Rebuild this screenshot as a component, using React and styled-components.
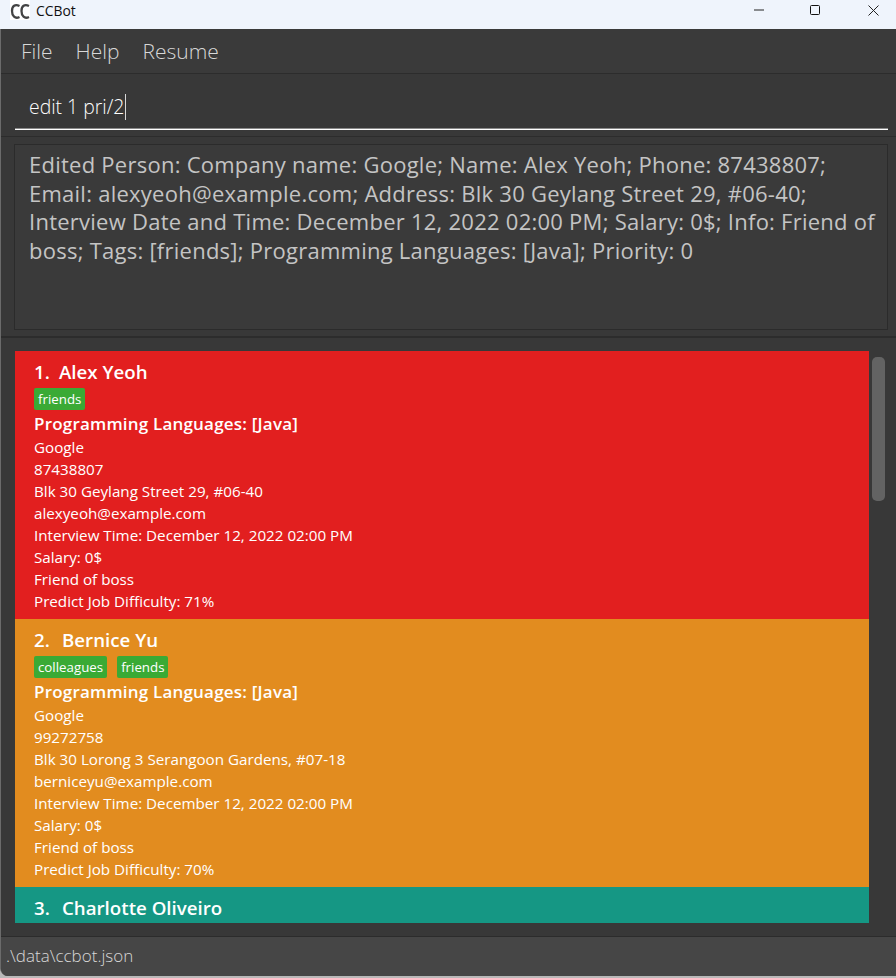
import React from 'react';
import styled, { createGlobalStyle } from 'styled-components';

const GlobalStyle = createGlobalStyle`
  html, body {
    margin: 0;
    padding: 0;
    background: #b4b4b4;
  }
  #root {
    height: 978px;
    overflow: hidden;
  }
`

const Screen = styled.div`
  width: 896px;
  height: 978px;
  display: flex;
  flex-direction: column;
  padding-bottom: 2px;
  box-sizing: border-box;
  font-family: 'Open Sans', 'Noto Sans', sans-serif;
  background: #b9b9b9;
`

const TitleBar = styled.div`
  height: 29px;
  flex: none;
  display: flex;
  align-items: flex-start;
  background: #eff4fc;
  color: #111;
  font-size: 13.9px;
`

const Logo = styled.svg`
  width: 20px;
  height: 20px;
  margin-left: 10px;
  background: #fff;
`

const AppName = styled.span`
  margin-left: 6px;
  flex: 1;
  line-height: 21px;
`

const WinButton = styled.div`
  width: 46px;
  height: 20px;
  margin-left: ${props => props.$gap || 0}px;
  display: flex;
  align-items: center;
  justify-content: center;
`

const Body = styled.div`
  flex: 1;
  min-height: 0;
  display: flex;
  flex-direction: column;
  background: #383838;
  border-left: 1px solid #6b6b6b;
  border-radius: 0 0 0 8px;
  overflow: hidden;
`

const MenuBar = styled.div`
  height: 44px;
  flex: none;
  display: flex;
  align-items: center;
  gap: 23px;
  padding-left: 20px;
  border-bottom: 1px solid #2c2c2c;
  background: #3a3a3a;
`

const MenuItem = styled.span`
  color: #d8d8d8;
  font-size: 21px;
  font-weight: 300;
`

const CommandPane = styled.div`
  height: 63px;
  flex: none;
  box-sizing: border-box;
  padding: 0 8px 0 14px;
  border-bottom: 1px solid #2c2c2c;
  display: flex;
`

const CommandBox = styled.div`
  flex: 1;
  height: 56px;
  box-sizing: border-box;
  border-bottom: 1px solid #ffffff;
  box-shadow: inset 0 -1px #8a8a8a;
  padding: 10px 0 0 14px;
  display: flex;
  align-items: center;
  color: #fff;
  font-size: 19.4px;
  font-weight: 300;
`

const Caret = styled.span`
  width: 1px;
  height: 26px;
  margin-left: 1px;
  background: #d8d8d8;
`

const ResultPane = styled.div`
  height: 201px;
  flex: none;
  box-sizing: border-box;
  padding: 7px 8px 6px 13px;
  border-bottom: 2px solid #2c2c2c;
`

const ResultBox = styled.div`
  height: 100%;
  box-sizing: border-box;
  border: 1px solid #2b2b2b;
  background: #3a3a3a;
  padding: 5px 8px 5px 14px;
  color: #c4c4c4;
  font-size: 22px;
  letter-spacing: 0.25px;
  line-height: 28.7px;
`

const ListPane = styled.div`
  flex: 1;
  min-height: 0;
  display: flex;
  padding: 13px 0 13px 14px;
  border-bottom: 1px solid #2c2c2c;
`

const CardList = styled.div`
  width: 854px;
  overflow: hidden;
`

const Card = styled.div`
  height: 268px;
  box-sizing: border-box;
  padding: 9px 19px 0;
  background: ${props => props.$color};
  color: #fff;
  font-size: 15.2px;
  line-height: 22px;
`

const CardName = styled.div`
  display: flex;
  font-size: 18.7px;
  font-weight: 600;
  line-height: 24px;
`

const CardIndex = styled.span`
  width: ${props => props.$width}px;
`

const Tags = styled.div`
  display: flex;
  gap: 10px;
  margin-top: 4px;
`

const Tag = styled.span`
  height: 22px;
  padding: 0 4px;
  border-radius: 2px;
  background: #3aaa35;
  font-size: 13.3px;
  line-height: 22px;
`

const Languages = styled.div`
  margin: 2px 0 0;
  font-size: 17px;
  letter-spacing: 0.2px;
  font-weight: 600;
  line-height: 24px;
`

const Track = styled.div`
  width: 27px;
  padding: 6px 0 0 3px;
  box-sizing: border-box;
`

const Thumb = styled.div`
  width: 13px;
  height: 144px;
  border-radius: 5px;
  background: #636363;
`

const StatusBar = styled.div`
  height: 39px;
  flex: none;
  display: flex;
  align-items: center;
  padding: 0 0 2px 5px;
  box-sizing: border-box;
  background: #464646;
  color: #d8d8d8;
  font-size: 17px;
  font-weight: 300;
`

const people = [
  {
    index: '1.',
    indexWidth: 25,
    name: 'Alex Yeoh',
    color: '#e21f1f',
    tags: ['friends'],
    lines: ['Google', '87438807', 'Blk 30 Geylang Street 29, #06-40', 'alexyeoh@example.com', 'Interview Time: December 12, 2022 02:00 PM', 'Salary: 0$', 'Friend of boss', 'Predict Job Difficulty: 71%'],
  },
  {
    index: '2.',
    indexWidth: 28,
    name: 'Bernice Yu',
    color: '#e28c1f',
    tags: ['colleagues', 'friends'],
    lines: ['Google', '99272758', 'Blk 30 Lorong 3 Serangoon Gardens, #07-18', 'berniceyu@example.com', 'Interview Time: December 12, 2022 02:00 PM', 'Salary: 0$', 'Friend of boss', 'Predict Job Difficulty: 70%'],
  },
  {
    index: '3.',
    indexWidth: 28,
    name: 'Charlotte Oliveiro',
    color: '#159784',
    tags: [],
    lines: [],
  },
];

const App = () => (
  <Screen>
    <GlobalStyle />
    <TitleBar>
      <Logo viewBox="0 0 20 20" fill="none" stroke="#444" strokeWidth="2.3">
        <path d="M9.5 6 C5 3.8, 2 6, 2 11 S5 19.2, 9.5 17" />
        <path d="M19 6 C14.5 3.8, 11.5 6, 11.5 11 S14.5 19.2, 19 17" />
      </Logo>
      <AppName>CCBot</AppName>
      <WinButton>
        <svg width="10" height="10" viewBox="0 0 10 10"><path d="M0 5h10" stroke="#222" /></svg>
      </WinButton>
      <WinButton $gap={10}>
        <svg width="10" height="10" viewBox="0 0 10 10"><rect x=".5" y=".5" width="9" height="9" rx="1" fill="none" stroke="#111" /></svg>
      </WinButton>
      <WinButton $gap={12}>
        <svg width="11" height="11" viewBox="0 0 11 11"><path d="M.5.5l10 10M10.5.5l-10 10" stroke="#222" /></svg>
      </WinButton>
    </TitleBar>
    <Body>
      <MenuBar>
        <MenuItem>File</MenuItem>
        <MenuItem>Help</MenuItem>
        <MenuItem>Resume</MenuItem>
      </MenuBar>
      <CommandPane>
        <CommandBox>edit 1 pri/2<Caret /></CommandBox>
      </CommandPane>
      <ResultPane>
        <ResultBox>
          Edited Person: Company name: Google; Name: Alex Yeoh; Phone: 87438807; Email: alexyeoh@example.com; Address: Blk 30 Geylang Street 29, #06-40; Interview Date and Time: December 12, 2022 02:00 PM; Salary: 0$; Info: Friend of boss; Tags: [friends]; Programming Languages: [Java]; Priority: 0
        </ResultBox>
      </ResultPane>
      <ListPane>
        <CardList>
          {people.map(p => (
            <Card key={p.name} $color={p.color}>
              <CardName>
                <CardIndex $width={p.indexWidth}>{p.index}</CardIndex>
                {p.name}
              </CardName>
              <Tags>
                {p.tags.map(t => <Tag key={t}>{t}</Tag>)}
              </Tags>
              {p.lines.length > 0 && <Languages>Programming Languages: [Java]</Languages>}
              {p.lines.map(l => <div key={l}>{l}</div>)}
            </Card>
          ))}
        </CardList>
        <Track><Thumb /></Track>
      </ListPane>
      <StatusBar>.\data\ccbot.json</StatusBar>
    </Body>
  </Screen>
);

export default App;
